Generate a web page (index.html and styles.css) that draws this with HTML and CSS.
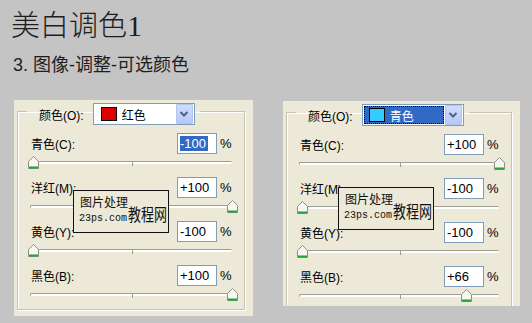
FILE: index.html
```html
<!DOCTYPE html>
<html lang="zh-CN">
<head>
  <meta charset="UTF-8" />
  <title>美白调色1</title>
  <link rel="stylesheet" href="styles.css">
</head>
<body>

  <h1 class="title">美白调色<span class="num">1</span></h1>
  <p class="step">3. 图像-调整-可选颜色</p>

  <div class="panels">

    <div class="panel panel-left">
      <fieldset class="group">
        <legend class="group-head">
          <span class="head-label">颜色(O):</span>
          <div class="combo">
            <span class="swatch swatch-red"></span>
            <span class="combo-text">红色</span>
            <span class="combo-btn">
              <svg width="14" height="18" viewBox="0 0 14 18"><path d="M3.5 7 L7 10.5 L10.5 7" fill="none" stroke="#4d6185" stroke-width="2"/></svg>
            </span>
          </div>
        </legend>

        <div class="row">
          <div class="row-head">
            <span class="row-label">青色(C):</span>
            <span class="field"><span class="selected">-100</span></span>
            <span class="pct">%</span>
          </div>
          <div class="slider">
            <div class="track"><span class="tick"></span></div>
            <div class="thumbs"><span class="thumb" style="--p:0"><svg width="11" height="13" viewBox="0 0 11 13"><path d="M0.5 12.5V5.5L5.5 0.5L10.5 5.5V12.5Z" fill="#f7f7f2" stroke="#8f8f84"/><path d="M1 11.5H10" stroke="#21a33a" stroke-width="2"/></svg></span></div>
          </div>
        </div>

        <div class="row">
          <div class="row-head">
            <span class="row-label">洋红(M):</span>
            <span class="field">+100</span>
            <span class="pct">%</span>
          </div>
          <div class="slider">
            <div class="track"><span class="tick"></span></div>
            <div class="thumbs"><span class="thumb" style="--p:1"><svg width="11" height="13" viewBox="0 0 11 13"><path d="M0.5 12.5V5.5L5.5 0.5L10.5 5.5V12.5Z" fill="#f7f7f2" stroke="#8f8f84"/><path d="M1 11.5H10" stroke="#21a33a" stroke-width="2"/></svg></span></div>
          </div>
        </div>

        <div class="row">
          <div class="row-head">
            <span class="row-label">黄色(Y):</span>
            <span class="field">-100</span>
            <span class="pct">%</span>
          </div>
          <div class="slider">
            <div class="track"><span class="tick"></span></div>
            <div class="thumbs"><span class="thumb" style="--p:0"><svg width="11" height="13" viewBox="0 0 11 13"><path d="M0.5 12.5V5.5L5.5 0.5L10.5 5.5V12.5Z" fill="#f7f7f2" stroke="#8f8f84"/><path d="M1 11.5H10" stroke="#21a33a" stroke-width="2"/></svg></span></div>
          </div>
        </div>

        <div class="row">
          <div class="row-head">
            <span class="row-label">黑色(B):</span>
            <span class="field">+100</span>
            <span class="pct">%</span>
          </div>
          <div class="slider">
            <div class="track"><span class="tick"></span></div>
            <div class="thumbs"><span class="thumb" style="--p:1"><svg width="11" height="13" viewBox="0 0 11 13"><path d="M0.5 12.5V5.5L5.5 0.5L10.5 5.5V12.5Z" fill="#f7f7f2" stroke="#8f8f84"/><path d="M1 11.5H10" stroke="#21a33a" stroke-width="2"/></svg></span></div>
          </div>
        </div>
      </fieldset>

      <div class="watermark">
        <div class="wm-top">图片处理</div>
        <div class="wm-bottom"><span class="wm-url">23ps.com</span><span class="wm-name">教程网</span></div>
      </div>
    </div>

    <div class="panel panel-right">
      <fieldset class="group">
        <legend class="group-head">
          <span class="head-label">颜色(O):</span>
          <div class="combo combo-active">
            <span class="combo-focus">
              <span class="swatch swatch-cyan"></span>
              <span class="combo-text">青色</span>
            </span>
            <span class="combo-btn">
              <svg width="14" height="18" viewBox="0 0 14 18"><path d="M3.5 7 L7 10.5 L10.5 7" fill="none" stroke="#4d6185" stroke-width="2"/></svg>
            </span>
          </div>
        </legend>

        <div class="row">
          <div class="row-head">
            <span class="row-label">青色(C):</span>
            <span class="field">+100</span>
            <span class="pct">%</span>
          </div>
          <div class="slider">
            <div class="track"><span class="tick"></span></div>
            <div class="thumbs"><span class="thumb" style="--p:1"><svg width="11" height="13" viewBox="0 0 11 13"><path d="M0.5 12.5V5.5L5.5 0.5L10.5 5.5V12.5Z" fill="#f7f7f2" stroke="#8f8f84"/><path d="M1 11.5H10" stroke="#21a33a" stroke-width="2"/></svg></span></div>
          </div>
        </div>

        <div class="row">
          <div class="row-head">
            <span class="row-label">洋红(M):</span>
            <span class="field">-100</span>
            <span class="pct">%</span>
          </div>
          <div class="slider">
            <div class="track"><span class="tick"></span></div>
            <div class="thumbs"><span class="thumb" style="--p:0"><svg width="11" height="13" viewBox="0 0 11 13"><path d="M0.5 12.5V5.5L5.5 0.5L10.5 5.5V12.5Z" fill="#f7f7f2" stroke="#8f8f84"/><path d="M1 11.5H10" stroke="#21a33a" stroke-width="2"/></svg></span></div>
          </div>
        </div>

        <div class="row">
          <div class="row-head">
            <span class="row-label">黄色(Y):</span>
            <span class="field">-100</span>
            <span class="pct">%</span>
          </div>
          <div class="slider">
            <div class="track"><span class="tick"></span></div>
            <div class="thumbs"><span class="thumb" style="--p:0"><svg width="11" height="13" viewBox="0 0 11 13"><path d="M0.5 12.5V5.5L5.5 0.5L10.5 5.5V12.5Z" fill="#f7f7f2" stroke="#8f8f84"/><path d="M1 11.5H10" stroke="#21a33a" stroke-width="2"/></svg></span></div>
          </div>
        </div>

        <div class="row">
          <div class="row-head">
            <span class="row-label">黑色(B):</span>
            <span class="field">+66</span>
            <span class="pct">%</span>
          </div>
          <div class="slider">
            <div class="track"><span class="tick"></span></div>
            <div class="thumbs"><span class="thumb" style="--p:0.83"><svg width="11" height="13" viewBox="0 0 11 13"><path d="M0.5 12.5V5.5L5.5 0.5L10.5 5.5V12.5Z" fill="#f7f7f2" stroke="#8f8f84"/><path d="M1 11.5H10" stroke="#21a33a" stroke-width="2"/></svg></span></div>
          </div>
        </div>
      </fieldset>

      <div class="watermark">
        <div class="wm-top">图片处理</div>
        <div class="wm-bottom"><span class="wm-url">23ps.com</span><span class="wm-name">教程网</span></div>
      </div>
    </div>

  </div>

</body>
</html>
```

FILE: styles.css
```css
body {
  margin: 0;
  background: #c4c4c4;
  color: #000;
  font-family: "Liberation Sans", "Noto Sans CJK SC", sans-serif;
  font-size: 12px;
}

.title {
  margin: 0;
  padding: 5px 0 0 11px;
  height: 39px;
  font-family: "Noto Sans CJK SC", sans-serif;
  font-size: 29px;
  font-weight: 300;
  line-height: 36px;
  color: #1e1e1e;
}

.title .num {
  font-family: "Liberation Serif", serif;
  font-size: 30px;
}

.step {
  margin: 0;
  padding: 10px 0 0 13px;
  height: 46px;
  font-size: 18px;
  line-height: 22px;
  color: #1e1e1e;
}

.panels {
  display: flex;
  align-items: flex-start;
  gap: 30px;
  padding-left: 14px;
}

.panel {
  position: relative;
  background: #ece9d8;
  padding: 0 8px 6px 3px;
}

.panel-left {
  width: 228px;
}

.panel-right {
  width: 226px;
  height: 199px;
  margin-top: 1px;
  overflow: hidden;
}

.group {
  margin: -3px 0 0 0;
  padding: 8px 12px 0 13px;
  border: 1px solid #c6c3b2;
  box-shadow: 1px 1px 0 #fff, inset 1px 1px 0 #fff;
  min-width: 0;
}

.group-head {
  display: flex;
  align-items: center;
  margin-left: -4px;
  padding: 6px 5px 0 12px;
}

.head-label {
  margin-right: 9px;
}

.combo {
  position: relative;
  display: flex;
  align-items: center;
  width: 100px;
  height: 20px;
  border: 1px solid #7f9db9;
  background: #fff;
}

.swatch {
  width: 14px;
  height: 12px;
  margin: 0 5px 0 7px;
  border: 1px solid #000;
}

.swatch-red {
  background: #e00000;
}

.swatch-cyan {
  background: #33ccff;
}

.combo-text {
  flex: 1;
}

.combo-btn {
  display: flex;
  align-items: center;
  justify-content: center;
  width: 15px;
  height: 18px;
  margin-right: 1px;
  background: linear-gradient(#cfdcfd, #b6c9f7);
  border: 0.5px solid #b2c5f2;
  border-radius: 1px;
}

.combo-active .combo-focus {
  flex: 1;
  display: flex;
  align-items: center;
  align-self: stretch;
  margin: 1px;
  background: #316ac5;
  color: #fff;
  outline: 1px dotted #000;
  outline-offset: -1px;
}

.combo-active .swatch {
  margin-left: 5px;
}

.row {
  height: 44px;
}

.row-head {
  display: flex;
  align-items: center;
  height: 21px;
}

.row-label {
  flex: 1;
}

.field {
  box-sizing: border-box;
  width: 40px;
  height: 21px;
  padding: 2px 0 0 2px;
  border: 1px solid #7f9db9;
  background: #fff;
  font-size: 13px;
  line-height: 15px;
}

.selected {
  background: #316ac5;
  color: #fff;
  padding-right: 2px;
}

.pct {
  width: 12px;
  margin-left: 3px;
  font-size: 13px;
}

.slider {
  position: relative;
  height: 23px;
}

.track {
  position: absolute;
  left: -1px;
  right: 0;
  top: 7px;
  height: 2px;
  background: #fff;
  border-top: 1px solid #9f9e93;
  border-left: 1px solid #9f9e93;
  border-radius: 2px;
}

.tick {
  position: absolute;
  left: 50%;
  top: 0;
  width: 1px;
  height: 4px;
  background: #9f9e93;
}

.thumbs {
  position: absolute;
  left: -3px;
  right: -6px;
  top: 2px;
  height: 13px;
}

.thumb {
  position: absolute;
  top: 0;
  left: calc((100% - 11px) * var(--p));
  line-height: 0;
}

.watermark {
  position: absolute;
  top: 90px;
  width: 94px;
  height: 41px;
  border: 1px solid #111;
  background: #ece9d8;
  color: #111;
}

.panel-left .watermark {
  left: 59px;
}

.panel-right .watermark {
  left: 55px;
  top: 86px;
}

.wm-top {
  padding: 5px 0 0 6px;
  font-size: 12px;
  line-height: 14px;
}

.wm-bottom {
  display: flex;
  align-items: flex-end;
  white-space: nowrap;
  padding-left: 5px;
  margin-top: 1px;
}

.wm-url {
  font-family: "Liberation Mono", monospace;
  font-size: 10px;
  line-height: 13px;
}

.wm-name {
  display: inline-block;
  font-size: 13px;
  line-height: 14px;
  margin-left: 1px;
  transform: scaleY(1.3);
  transform-origin: bottom;
}
```
